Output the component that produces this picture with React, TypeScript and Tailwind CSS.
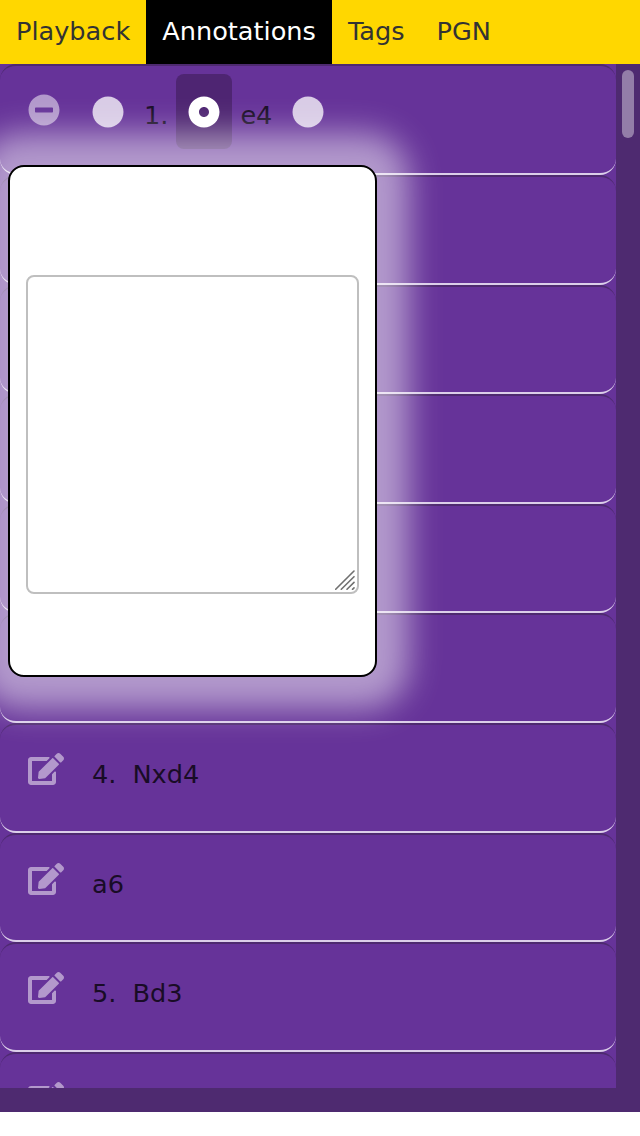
import { FaCircle, FaDotCircle, FaEdit, FaMinusCircle } from "react-icons/fa";

const tabs = ["Playback", "Annotations", "Tags", "PGN"];

const moves = [
  { id: 1, text: "" },
  { id: 2, text: "" },
  { id: 3, text: "" },
  { id: 4, text: "" },
  { id: 5, text: "" },
  { id: 6, number: "4.", text: "Nxd4" },
  { id: 7, text: "a6" },
  { id: 8, number: "5.", text: "Bd3" },
  { id: 9, text: "" },
];

const rowClass =
  "shrink-0 rounded-[16px] border-t-2 border-b-2 border-t-[#4e2a70] border-b-[#dccfea]";

function TabBar() {
  return (
    <nav className="flex h-16 shrink-0 bg-[#ffd700] text-[#333333]">
      {tabs.map((tab) => (
        <button
          key={tab}
          className={
            tab === "Annotations"
              ? "h-16 bg-black px-4 pb-0.5 text-white"
              : "h-16 px-4 pb-0.5"
          }
        >
          {tab}
        </button>
      ))}
    </nav>
  );
}

function ActiveMove() {
  return (
    <div className={`${rowClass} flex h-[111px] items-start text-[#190c26]`}>
      <FaMinusCircle className="mt-7 ml-7 size-8 text-[#b399cc]" />
      <FaCircle className="mt-[30px] ml-[31.7px] size-8 text-[#d9cce6]" />
      <span className="mt-[29px] ml-[20.3px] w-8 leading-10">1.</span>
      <div className="mt-2 flex h-[75px] w-14 items-center justify-center rounded-lg bg-[#4e2572] pl-[0.8px] text-white">
        <FaDotCircle className="size-8" />
      </div>
      <span className="mt-[29px] ml-[8.4px] w-[52px] leading-10">e4</span>
      <FaCircle className="mt-[30px] size-8 text-[#d9cce6]" />
    </div>
  );
}

function Editor() {
  return (
    <div className="absolute top-[165.4px] left-2 flex h-[511.6px] w-[369.4px] flex-col rounded-[16px] border-2 border-black bg-white px-4 pt-[107.4px] shadow-[0_0_32px_32px_rgba(255,255,255,0.5)]">
      <div className="relative h-[319.4px] w-[333.4px]">
        <textarea className="block h-full w-full resize-none rounded-lg border-2 border-[#bfbfbf] bg-white outline-none" />
        <svg
          className="absolute right-1 bottom-1 size-5"
          viewBox="0 0 20 20"
          stroke="#707070"
          strokeWidth="1.6"
          strokeLinecap="round"
        >
          <path d="M0.7 19.3 19 1M6.3 19.3 19 6.7M12 19.3 19 12.4M17.5 19.3 19 17.9" />
        </svg>
      </div>
    </div>
  );
}

export default function App() {
  return (
    <div className="h-[1136px] w-[640px] overflow-hidden bg-white font-['DejaVu_Sans',sans-serif] text-[25.6px]">
      <TabBar />
      <main className="relative h-[1048px] overflow-hidden bg-[#4e2a70]">
        <div className="flex h-[1024px]">
          <div className="flex w-[616px] flex-col overflow-hidden bg-[#663399]">
            <ActiveMove />
            {moves.map((move) => (
              <div key={move.id} className={`${rowClass} flex h-[109.6px] items-start text-[#190c26]`}>
                <FaEdit className="mt-7 ml-7 h-8 w-9 text-[#b399cc]" />
                <div className="mt-[29px] ml-7 flex gap-4 leading-10">
                  {move.number && <span>{move.number}</span>}
                  <span>{move.text}</span>
                </div>
              </div>
            ))}
          </div>
          <div className="flex w-6 justify-center pt-1.5">
            <div className="h-[68px] w-3 rounded-full bg-[#937da8]" />
          </div>
        </div>
        <div className="absolute inset-x-0 -top-16 h-[1112px]">
          <Editor />
        </div>
      </main>
    </div>
  );
}
